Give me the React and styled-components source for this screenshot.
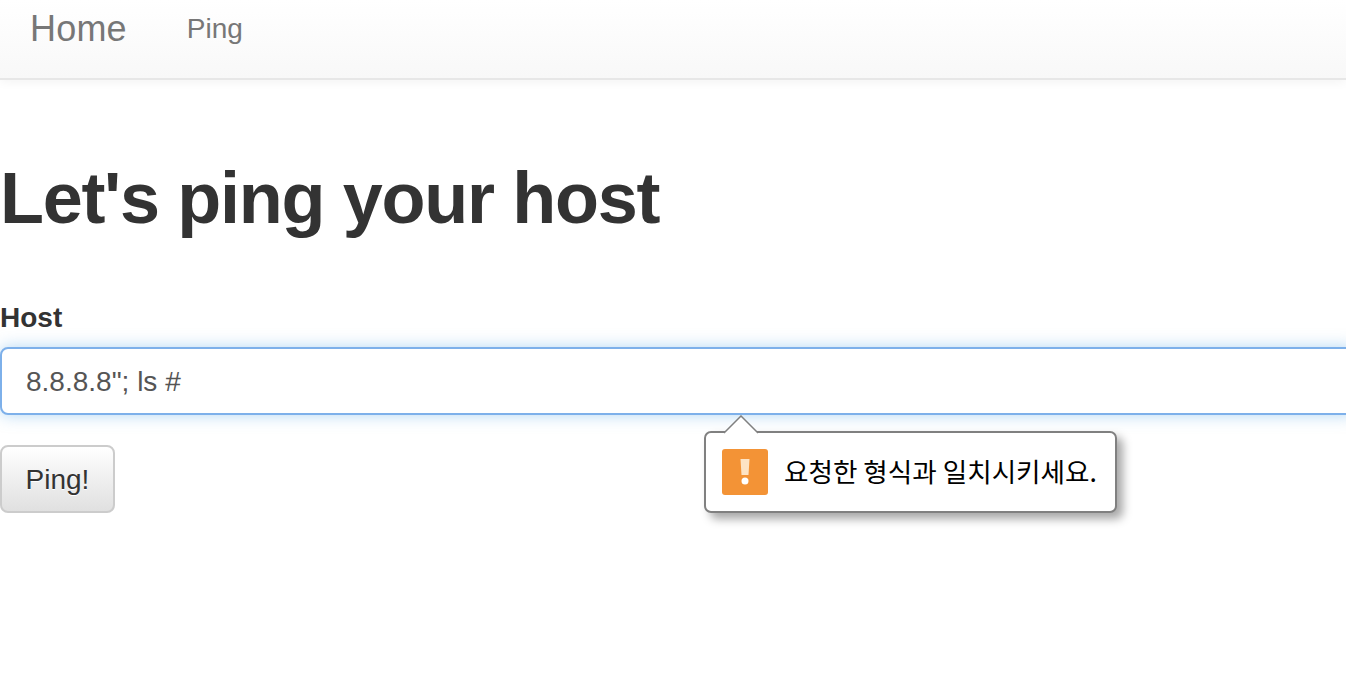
import React from 'react';
import styled, { createGlobalStyle } from 'styled-components';

const GlobalStyle = createGlobalStyle`
    * {
        box-sizing: border-box;
    }

    html, body, #root {
        height: 100%;
    }

    html {
        overflow: hidden;
    }

    body {
        margin: 0;
        background: #fff;
        font-family: "Liberation Sans", Arial, sans-serif;
        font-size: 28px;
        color: #333;
    }
`;

const Navbar = styled.nav`
    display: flex;
    align-items: flex-start;
    height: 80px;
    padding-left: 30px;
    background: linear-gradient(to bottom, #fff 0%, #f8f8f8 100%);
    border-bottom: 2px solid #e7e7e7;
    box-shadow: 0 2px 10px rgba(0, 0, 0, 0.05);
`;

const Brand = styled.a`
    font-size: 36px;
    line-height: 58px;
    letter-spacing: 0.2px;
    color: #777;
`;

const NavLink = styled.a`
    margin-left: 60px;
    font-size: 28px;
    line-height: 58px;
    color: #777;
`;

const Container = styled.main`
    display: flex;
    flex-direction: column;
    align-items: flex-start;
`;

const Title = styled.h1`
    margin: 76px 0 0;
    font-size: 72px;
    line-height: 84px;
    font-weight: 700;
    letter-spacing: -1.3px;
    color: #333;
`;

const FieldGroup = styled.div`
    position: relative;
    width: 100%;
    margin-top: 62px;
`;

const Label = styled.label`
    display: block;
    height: 30px;
    font-size: 28px;
    line-height: 32px;
    font-weight: 700;
    color: #333;
`;

const Input = styled.input`
    display: block;
    width: calc(100% + 10px);
    height: 68px;
    margin-top: 15px;
    padding: 2px 24px 0;
    border: 2px solid #7db0ea;
    border-radius: 8px;
    outline: none;
    font-family: inherit;
    font-size: 28px;
    color: #555;
    box-shadow: 0 0 16px rgba(102, 175, 233, 0.5);
`;

const SubmitButton = styled.button`
    width: 115px;
    height: 68px;
    margin-top: 30px;
    padding: 2px 0 0;
    border: 2px solid #ccc;
    border-radius: 8px;
    background: linear-gradient(to bottom, #fff 0%, #e0e0e0 100%);
    font-family: inherit;
    font-size: 28px;
    color: #333;
    text-shadow: 0 1px 0 #fff;
`;

const Bubble = styled.div`
    position: absolute;
    top: 129px;
    left: 704px;
    display: flex;
    align-items: center;
    gap: 16px;
    width: 413px;
    height: 82px;
    padding: 0 16px;
    background: #fff;
    border: 2px solid #808080;
    border-radius: 7px;
    box-shadow: 6px 6px 10px rgba(0, 0, 0, 0.35);
`;

const BubbleArrow = styled.svg`
    position: absolute;
    top: -18px;
    left: 17px;
    display: block;
`;

const WarningIcon = styled.svg`
    flex: none;
    display: block;
`;

const BubbleText = styled.span`
    padding-bottom: 2px;
    font-family: "Noto Sans CJK KR", "Liberation Sans", sans-serif;
    font-size: 26.6px;
    line-height: 30px;
    color: #000;
    white-space: nowrap;
`;

export default function App() {
    return (
        <>
            <GlobalStyle />
            <Navbar>
                <Brand>Home</Brand>
                <NavLink>Ping</NavLink>
            </Navbar>
            <Container>
                <Title>Let's ping your host</Title>
                <FieldGroup>
                    <Label>Host</Label>
                    <Input readOnly value={'8.8.8.8"; ls #'} />
                    <Bubble>
                        <BubbleArrow width="36" height="19" viewBox="0 0 36 19">
                            <path d="M1 18 L18 1 L35 18" fill="#fff" stroke="#808080" strokeWidth="1.5" />
                        </BubbleArrow>
                        <WarningIcon width="46" height="46" viewBox="0 0 46 46">
                            <rect width="46" height="46" rx="3" fill="#f39336" />
                            <path d="M18.5 10 H27.5 L26.5 26 H19.5 Z" fill="#fde3c4" />
                            <circle cx="23" cy="32" r="3.5" fill="#fff" />
                        </WarningIcon>
                        <BubbleText>요청한 형식과 일치시키세요.</BubbleText>
                    </Bubble>
                </FieldGroup>
                <SubmitButton>Ping!</SubmitButton>
            </Container>
        </>
    );
}
